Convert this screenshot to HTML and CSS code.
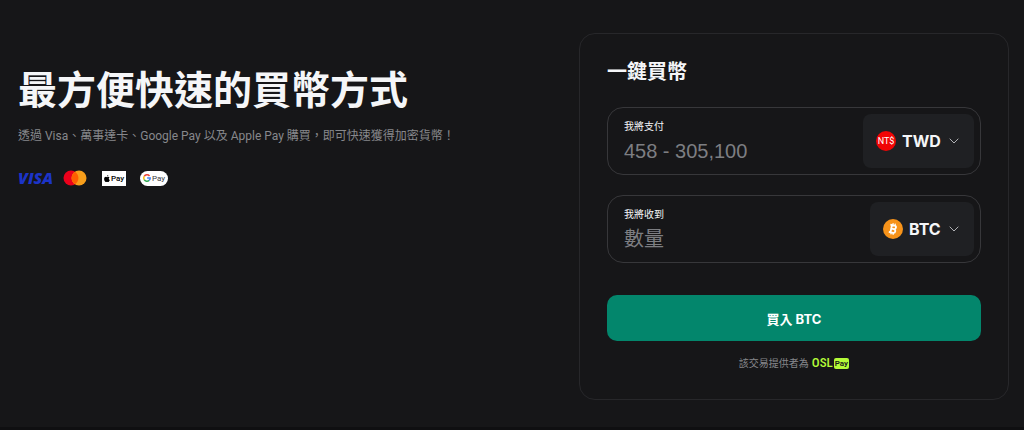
FILE: index.html
```html
<!DOCTYPE html>
<html lang="zh-Hant">
<head>
    <meta charset="UTF-8">
    <meta name="viewport" content="width=device-width, initial-scale=1.0">
    <title>一鍵買幣</title>
    <link rel="stylesheet" href="styles.css">
</head>
<body>

    <main class="hero">
        <section class="intro">
            <h1>最方便快速的買幣方式</h1>
            <p>透過 Visa、萬事達卡、Google Pay 以及 Apple Pay 購買，即可快速獲得加密貨幣！</p>

            <div class="payments">
                <span class="visa">VISA</span>
                <svg class="mastercard" width="24" height="16" viewBox="0 0 24 16" role="img" aria-label="Mastercard">
                    <circle cx="8" cy="8" r="7.5" fill="#eb001b"/>
                    <circle cx="16" cy="8" r="7.5" fill="#f79e1b"/>
                    <path d="M12 1.7a7.5 7.5 0 0 1 0 12.6a7.5 7.5 0 0 1 0-12.6z" fill="#ff5f00"/>
                </svg>
                <span class="apple-pay">
                    <svg width="6" height="7" viewBox="0 0 12 14" aria-hidden="true">
                        <path d="M8.6 0c.1 1.6-1.2 3.1-2.7 3C5.7 1.5 7.1.1 8.6 0zM11 4.8c-2.1 1.3-1.7 4.1.6 5C11 11.5 9.7 14 8.2 14c-.9 0-1.2-.5-2.2-.5s-1.4.5-2.2.5C2.1 14 .2 11 .2 8.2c0-2.9 1.8-4.5 3.6-4.5 1 0 1.7.6 2.3.6.6 0 1.4-.6 2.6-.6.9 0 1.8.4 2.3 1.1z"/>
                    </svg>
                    <span>Pay</span>
                </span>
                <span class="google-pay">
                    <svg width="8" height="8" viewBox="0 0 14 14" fill="none" stroke-width="2.6" aria-hidden="true">
                        <path d="M11.4 3.4A5.6 5.6 0 0 0 2.1 4.3" stroke="#ea4335"/>
                        <path d="M2.1 4.3a5.6 5.6 0 0 0 0 5.4" stroke="#fbbc04"/>
                        <path d="M2.1 9.7a5.6 5.6 0 0 0 8.6 1.5" stroke="#34a853"/>
                        <path d="M10.7 11.2A5.6 5.6 0 0 0 12.6 7H7.2" stroke="#4285f4"/>
                    </svg>
                    <span>Pay</span>
                </span>
            </div>
        </section>

        <form class="card">
            <h2>一鍵買幣</h2>

            <div class="field">
                <div class="amount">
                    <label for="pay">我將支付</label>
                    <input type="text" id="pay" inputmode="decimal" placeholder="458 - 305,100">
                </div>
                <div class="currency">
                    <svg width="20" height="20" viewBox="0 0 20 20" aria-hidden="true">
                        <circle cx="10" cy="10" r="10" fill="#f00505"/>
                        <text class="coin-text" x="10" y="13" text-anchor="middle">NT$</text>
                    </svg>
                    <select aria-label="支付貨幣">
                        <option>TWD</option>
                    </select>
                    <svg class="arrow" width="10" height="6" viewBox="0 0 10 6" aria-hidden="true">
                        <path d="M.7.7 5 5 9.3.7"/>
                    </svg>
                </div>
            </div>

            <div class="field">
                <div class="amount">
                    <label for="receive">我將收到</label>
                    <input type="text" id="receive" inputmode="decimal" placeholder="數量">
                </div>
                <div class="currency">
                    <svg width="20" height="20" viewBox="0 0 20 20" aria-hidden="true">
                        <circle cx="10" cy="10" r="10" fill="#f7931a"/>
                        <g transform="rotate(12 10 10)" fill="none" stroke="#fff" stroke-width="1.8">
                            <path d="M6.5 6.3h4.3a1.8 1.8 0 0 1 0 3.6H8M10.8 9.9a1.9 1.9 0 0 1 0 3.8H6.5M8.2 6.3v7.4"/>
                            <path d="M9 4.2v2M11.2 4.2v2M9 13.7v2M11.2 13.7v2" stroke-width="1.2"/>
                        </g>
                    </svg>
                    <select aria-label="收到貨幣">
                        <option>BTC</option>
                    </select>
                    <svg class="arrow" width="10" height="6" viewBox="0 0 10 6" aria-hidden="true">
                        <path d="M.7.7 5 5 9.3.7"/>
                    </svg>
                </div>
            </div>

            <button type="submit" class="buy">買入 BTC</button>

            <div class="provider">
                <span>該交易提供者為</span>
                <span class="osl">OSL</span>
                <span class="osl-pay">Pay</span>
            </div>
        </form>
    </main>

</body>
</html>
```
FILE: styles.css
```css
* {
    box-sizing: border-box;
}

body {
    margin: 0;
    font-family: Inter, "Noto Sans CJK TC", sans-serif;
    color: #f5f6f8;
    background-color: #161618;
}

h1, h2, p {
    margin: 0;
}

.hero {
    display: flex;
    justify-content: space-between;
    align-items: flex-start;
    padding: 33px 15px 27px 18px;
    border-bottom: 3px solid #0f0f11;
}

.intro {
    padding-top: 28px;
}

.intro h1 {
    font-size: 39px;
    line-height: 58px;
    font-weight: 700;
}

.intro p {
    margin-top: 7px;
    font-family: Roboto, "Noto Sans CJK TC", sans-serif;
    font-size: 12px;
    line-height: 20px;
    color: #87888c;
}

/* Payment logos */
.payments {
    display: flex;
    align-items: center;
    margin-top: 24px;
    height: 16px;
}

.visa {
    font-family: "Open Sans", sans-serif;
    font-size: 16px;
    font-weight: 800;
    font-style: italic;
    color: #1c34c8;
}

.mastercard {
    margin-left: 10px;
}

.apple-pay,
.google-pay {
    display: flex;
    align-items: center;
    justify-content: center;
    gap: 1px;
    height: 15px;
    font-family: Roboto, sans-serif;
    font-size: 8px;
    line-height: 15px;
    background-color: #fff;
}

.apple-pay {
    width: 24px;
    margin-left: 15px;
    font-weight: 500;
    color: #000;
}

.google-pay {
    width: 28px;
    margin-left: 14px;
    border-radius: 8px;
    color: #3c4043;
}

/* Buy form */
.card {
    width: 43.4%;
    padding: 24px 27px 28px;
    border: 1px solid #27272a;
    border-radius: 16px;
}

.card h2 {
    margin-bottom: 21px;
    font-size: 20px;
    line-height: 28px;
    font-weight: 700;
}

.field {
    display: flex;
    justify-content: space-between;
    margin-bottom: 20px;
    padding: 6px;
    border: 1px solid #37373a;
    border-radius: 16px;
}

.amount {
    display: flex;
    flex: 1;
    flex-direction: column;
    min-width: 0;
    padding: 4px 0 0 10px;
}

.amount label {
    font-size: 10px;
    line-height: 16px;
}

.amount input {
    width: 100%;
    height: 34px;
    padding: 0;
    border: none;
    outline: none;
    background: none;
    color: #f5f6f8;
    font-family: "Liberation Sans", "Noto Sans CJK TC", sans-serif;
    font-size: 20px;
}

.amount input::placeholder {
    color: #7d7e82;
}

.currency {
    display: flex;
    align-items: center;
    height: 54px;
    padding: 0 15px 0 13px;
    border-radius: 8px;
    background-color: #1f2023;
}

.currency select {
    margin: 0 8px 0 6px;
    padding: 0;
    border: none;
    outline: none;
    appearance: none;
    background: none;
    color: #f5f6f8;
    font-family: inherit;
    font-size: 16px;
    font-weight: 700;
}

.coin-text {
    font-family: Roboto, sans-serif;
    font-size: 9px;
    fill: #fff;
}

.arrow {
    fill: none;
    stroke: #b0b1b5;
}

.buy {
    width: 100%;
    height: 46px;
    margin-top: 12px;
    padding: 0;
    border: none;
    border-radius: 10px;
    background-color: #03866c;
    color: #fff;
    font-family: inherit;
    font-size: 13px;
    font-weight: 700;
    cursor: pointer;
}

.provider {
    display: flex;
    align-items: center;
    justify-content: center;
    margin-top: 14px;
    font-size: 10px;
    line-height: 16px;
    color: #87888c;
}

.osl {
    margin-left: 3px;
    font-family: "Roboto Condensed", "Open Sans Condensed", Roboto, sans-serif;
    font-size: 13px;
    font-weight: 500;
    color: #b4fb38;
}

.osl-pay {
    margin-left: 1px;
    padding: 0 1px;
    border-radius: 2px;
    background-color: #b4fb38;
    color: #161618;
    font-family: Roboto, sans-serif;
    font-size: 8px;
    line-height: 11px;
    font-weight: 600;
}

@media screen and (max-width: 768px) {
    .hero {
        flex-direction: column;
        gap: 24px;
    }

    .card {
        width: 100%;
    }
}
```
